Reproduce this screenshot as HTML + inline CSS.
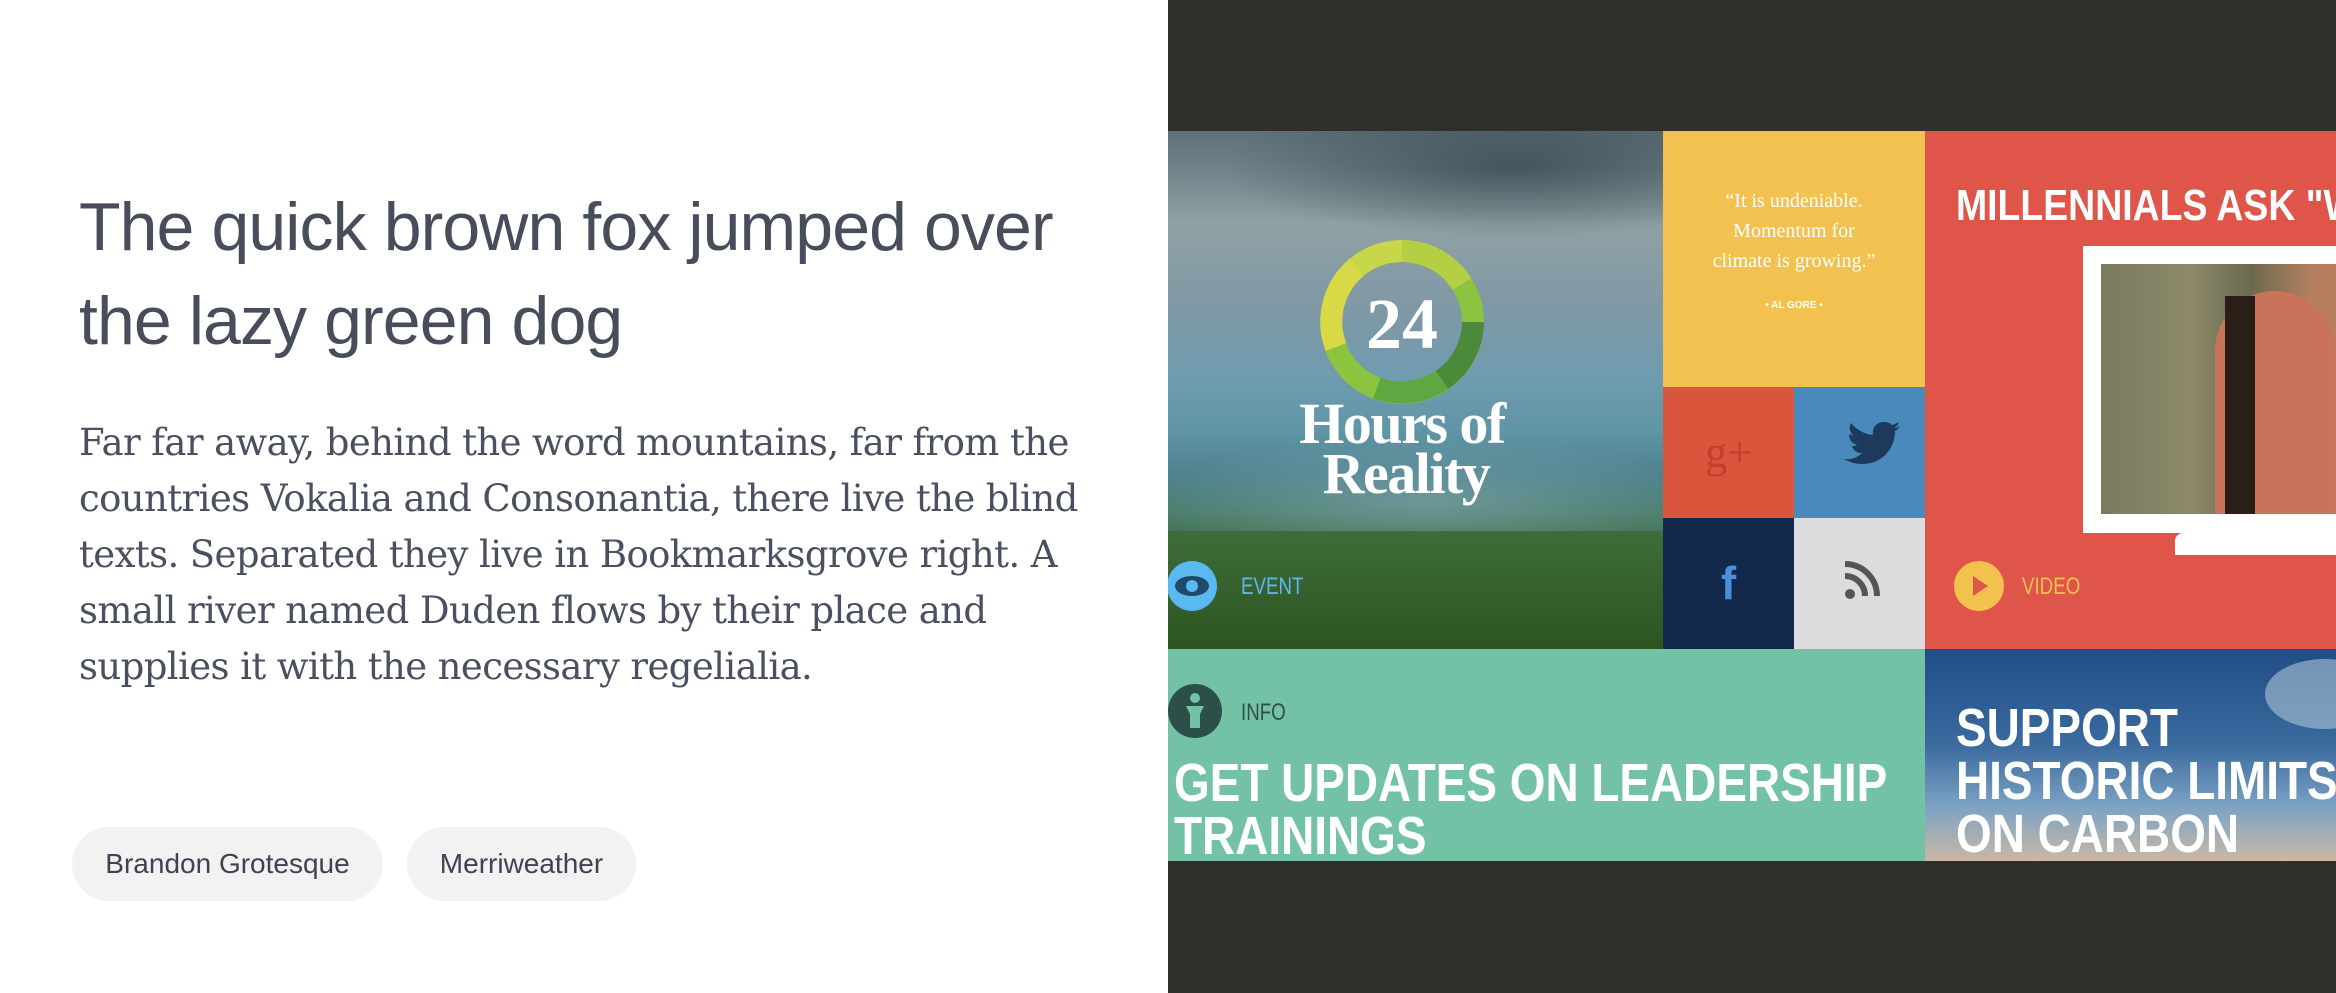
<!DOCTYPE html>
<html><head><meta charset="utf-8"><style>
*{margin:0;padding:0;box-sizing:border-box}
body{width:2336px;height:993px;overflow:hidden;background:#fff;position:relative;font-family:"Liberation Sans",sans-serif}
.a{position:absolute}
h1{position:absolute;left:79px;top:180px;font-family:"Liberation Sans",sans-serif;font-weight:400;font-size:68px;line-height:94px;color:#474d5a;letter-spacing:-0.9px;white-space:nowrap}
p.body{position:absolute;left:79px;top:415px;font-family:"DejaVu Serif",serif;font-size:37px;line-height:56px;color:#4a5060;white-space:nowrap;letter-spacing:-0.6px}
.pill{position:absolute;top:827px;height:74px;border-radius:37px;background:#f2f2f3;color:#3d4350;font-size:28px;line-height:74px;text-align:center}
.dark{position:absolute;left:1168px;top:0;width:1168px;height:993px;background:#302f2b;overflow:hidden}
.t{position:absolute;overflow:hidden}
.cond{font-family:"Liberation Sans",sans-serif;font-weight:700;color:#fff;white-space:nowrap;transform:scaleX(0.85);transform-origin:left top}
.lbl{position:absolute;font-family:"Liberation Sans",sans-serif;font-size:24px;transform:scaleX(0.78);transform-origin:left top}
</style></head><body>
<h1>The quick brown fox jumped over<br>the lazy green dog</h1>
<p class="body">Far far away, behind the word mountains, far from the<br>countries Vokalia and Consonantia, there live the blind<br>texts. Separated they live in Bookmarksgrove right. A<br>small river named Duden flows by their place and<br>supplies it with the necessary regelialia.</p>
<div class="pill" style="left:72px;width:311px">Brandon Grotesque</div>
<div class="pill" style="left:407px;width:229px">Merriweather</div>

<div class="dark">
 <div class="t" style="left:0;top:131px;width:495px;height:518px;background:linear-gradient(180deg,#5d6f78 0%,#8fa1a3 18%,#7f98a6 35%,#6f9cb0 48%,#5f95a4 58%,#4f8290 66%,#4b7d6a 74%,#3e6c3c 82%,#2f5a26 100%)">
  <div class="a" style="left:0;top:0;width:495px;height:120px;background:radial-gradient(ellipse at 70% 30%,rgba(40,55,65,.6),transparent 60%)"></div>
  <div class="a" style="left:-40px;top:300px;width:600px;height:140px;background:radial-gradient(ellipse at 50% 50%,rgba(140,175,185,.5),transparent 65%)"></div>
  <div class="a" style="left:0;top:400px;width:495px;height:118px;background:linear-gradient(180deg,#3f6d3a,#2c5420)"></div>
  <svg class="a" style="left:0;top:0" width="495" height="518">
   <g transform="translate(234,191)" fill="none" stroke-width="22">
    <circle r="71" stroke="#8cc43f"/>
    <path d="M0,-71 A71,71 0 0 1 60,-38" stroke="#b5cf45"/>
    <path d="M71,0 A71,71 0 0 1 40,58" stroke="#4b8a3a"/>
    <path d="M40,58 A71,71 0 0 1 -25,66" stroke="#5da841"/>
    <path d="M-66,25 A71,71 0 0 1 -45,-55" stroke="#d9d948"/>
    <path d="M-45,-55 A71,71 0 0 1 0,-71" stroke="#c8d64a"/>
   </g>
   <text x="234" y="217" text-anchor="middle" font-family="Liberation Serif,serif" font-weight="700" font-size="72" fill="#fff">24</text>
   <text x="234" y="312" text-anchor="middle" font-family="Liberation Serif,serif" font-weight="700" font-size="58" fill="#fff" letter-spacing="-1.5">Hours of</text>
   <text x="238" y="362" text-anchor="middle" font-family="Liberation Serif,serif" font-weight="700" font-size="58" fill="#fff" letter-spacing="-1.5">Reality</text>
   <circle cx="24" cy="455" r="25" fill="#5bb8f0"/>
   <ellipse cx="24" cy="455" rx="17" ry="10" fill="#1f4a6a"/>
   <circle cx="24" cy="455" r="6" fill="#5bb8f0"/>
  </svg>
  <div class="lbl" style="left:73px;top:442px;color:#5bb8f0">EVENT</div>
 </div>
 <div class="t" style="left:495px;top:131px;width:262px;height:256px;background:#f2c14f;color:#fff;text-align:center;font-family:'Liberation Serif',serif;font-size:20px;line-height:30px">
  <div style="margin-top:55px">“It is undeniable.<br>Momentum for<br>climate is growing.”</div>
  <div style="font-family:'Liberation Sans',sans-serif;font-size:10px;font-weight:700;margin-top:15px">• AL GORE •</div>
 </div>
 <div class="t" style="left:495px;top:387px;width:131px;height:131px;background:#d9553b;color:#c23f2c;font-family:'Liberation Serif',serif;font-size:44px;text-align:center;line-height:131px">g+</div>
 <div class="t" style="left:626px;top:387px;width:131px;height:131px;background:#4a89bb">
  <svg width="131" height="131"><path d="M50,72 c8,1 14,-2 18,-6 c-6,0 -9,-3 -10,-7 c2,0 3,0 5,-1 c-6,-2 -8,-6 -8,-11 c2,1 3,1 5,2 c-5,-4 -5,-9 -3,-13 c6,7 13,11 22,12 c-1,-8 4,-13 11,-13 c3,0 6,1 8,3 c3,-1 5,-2 7,-3 c-1,3 -3,5 -5,6 c2,0 4,-1 6,-2 c-1,2 -3,4 -5,5 c0,17 -12,33 -33,33 c-7,0 -13,-2 -18,-5z" fill="#1d3a5c"/></svg>
 </div>
 <div class="t" style="left:495px;top:518px;width:131px;height:131px;background:#13294b;color:#4a90d9;font-weight:700;font-size:46px;text-align:center;line-height:131px">f</div>
 <div class="t" style="left:626px;top:518px;width:131px;height:131px;background:#dcdcdf">
  <svg width="131" height="131"><circle cx="56" cy="76" r="5" fill="#555"/><path d="M51,58 a20,20 0 0 1 20,20" stroke="#555" stroke-width="6" fill="none"/><path d="M51,46 a32,32 0 0 1 32,32" stroke="#555" stroke-width="6" fill="none"/></svg>
 </div>
 <div class="t" style="left:757px;top:131px;width:411px;height:518px;background:#e0554a">
  <div class="cond" style="position:absolute;left:31px;top:50px;font-size:44px">MILLENNIALS ASK "WHAT</div>
  <div class="a" style="left:158px;top:115px;width:300px;height:287px;background:#fff"></div>
  <div class="a" style="left:176px;top:133px;width:300px;height:250px;background:linear-gradient(90deg,#7a7a5e 0%,#8c8a6a 30%,#6b6a4e 50%,#b48060 70%,#c97a5a 100%)"></div>
  <div class="a" style="left:290px;top:160px;width:120px;height:223px;border-radius:60px 60px 0 0;background:#c9735a"></div>
  <div class="a" style="left:300px;top:165px;width:30px;height:218px;background:#2a1e18"></div>
  <div class="a" style="left:250px;top:402px;width:200px;height:22px;border-radius:8px 0 0 0;background:#fff"></div>
  <svg class="a" style="left:29px;top:430px" width="60" height="60"><circle cx="25" cy="25" r="25" fill="#f2c14e"/><path d="M19,15 L34,25 L19,35z" fill="#e0554a"/></svg>
  <div class="lbl" style="left:97px;top:442px;color:#f2c14e">VIDEO</div>
 </div>
 <div class="t" style="left:0;top:649px;width:757px;height:212px;background:#74c2a6">
  <svg class="a" style="left:0;top:35px" width="60" height="60"><circle cx="27" cy="27" r="27" fill="#2d4f49"/><circle cx="27" cy="14" r="5" fill="#74c2a6"/><path d="M18,22 h18 l-4,8 v14 h-10 v-14z" fill="#74c2a6"/></svg>
  <div class="lbl" style="left:73px;top:50px;color:#2d4f49">INFO</div>
  <div class="cond" style="position:absolute;left:6px;top:108px;font-size:54px;line-height:53px">GET UPDATES ON LEADERSHIP<br>TRAININGS</div>
 </div>
 <div class="t" style="left:757px;top:649px;width:411px;height:212px;background:linear-gradient(180deg,#1f4d85 0%,#3a6a9e 45%,#7ea3c4 75%,#c9b8a4 100%)">
  <div class="a" style="left:340px;top:10px;width:120px;height:70px;border-radius:50%;background:rgba(200,215,230,.5)"></div>
  <div class="cond" style="position:absolute;left:31px;top:53px;font-size:54px;line-height:53px">SUPPORT<br>HISTORIC LIMITS<br>ON CARBON</div>
 </div>
</div>
</body></html>
